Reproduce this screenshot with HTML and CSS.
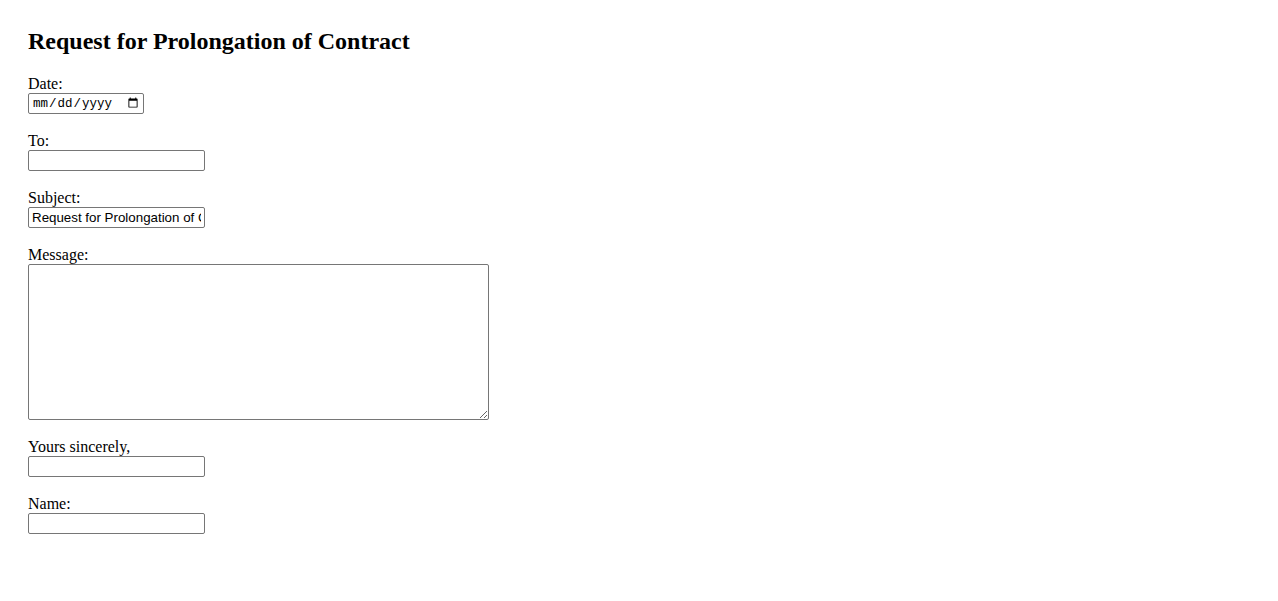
FILE: index.html
```html
<!DOCTYPE html>
<html lang="en">
<head>
<meta charset="utf-8">
<title>Request for Prolongation of Contract</title>
<link rel="stylesheet" href="styles.css">
</head>
<body>
<main class="page">
  <h2 class="title">Request for Prolongation of Contract</h2>
  <form class="letter">
    <div class="field">
      <label class="label" for="date">Date:</label>
      <input class="input input-date" type="date" id="date">
    </div>
    <div class="field">
      <label class="label" for="to">To:</label>
      <input class="input input-text" type="text" id="to">
    </div>
    <div class="field">
      <label class="label" for="subject">Subject:</label>
      <input class="input input-text" type="text" id="subject" value="Request for Prolongation of Contract">
    </div>
    <div class="field">
      <label class="label" for="message">Message:</label>
      <textarea class="message" id="message"></textarea>
    </div>
    <div class="field">
      <label class="label" for="closing">Yours sincerely,</label>
      <input class="input input-text" type="text" id="closing">
    </div>
    <div class="field">
      <label class="label" for="name">Name:</label>
      <input class="input input-text" type="text" id="name">
    </div>
  </form>
</main>
</body>
</html>
```

FILE: styles.css
```css
html, body {
  margin: 0;
  padding: 0;
  background: #ffffff;
}

body {
  font-family: "Liberation Serif", "Times New Roman", serif;
  font-size: 16px;
  color: #000000;
}

.page {
  padding: 27px 28px 28px 28px;
}

.title {
  margin: 0 0 20px 0;
  font-size: 24px;
  line-height: 28px;
  font-weight: bold;
}

.letter {
  display: flex;
  flex-direction: column;
  gap: 18px;
  align-items: flex-start;
}

.field {
  display: flex;
  flex-direction: column;
  align-items: flex-start;
}

.label {
  display: block;
  line-height: 18px;
  height: 18px;
}

.input {
  box-sizing: border-box;
  height: 21px;
  margin: 0;
  border: 1px solid #767676;
  border-radius: 2px;
  background: #ffffff;
  color: #000000;
  font-family: "Liberation Sans", Arial, sans-serif;
  font-size: 13.33px;
  padding: 1px 3px;
}

.input-text {
  width: 177px;
}

.input-date {
  width: 116px;
  font-family: "Liberation Mono", "Courier New", monospace;
  font-size: 12.5px;
  padding: 1px 2px 1px 3px;
}

.message {
  box-sizing: border-box;
  width: 461px;
  height: 156px;
  margin: 0;
  border: 1px solid #767676;
  border-radius: 2px;
  padding: 2px;
  font-family: "Liberation Mono", "Courier New", monospace;
  font-size: 13.33px;
  display: block;
}
```
